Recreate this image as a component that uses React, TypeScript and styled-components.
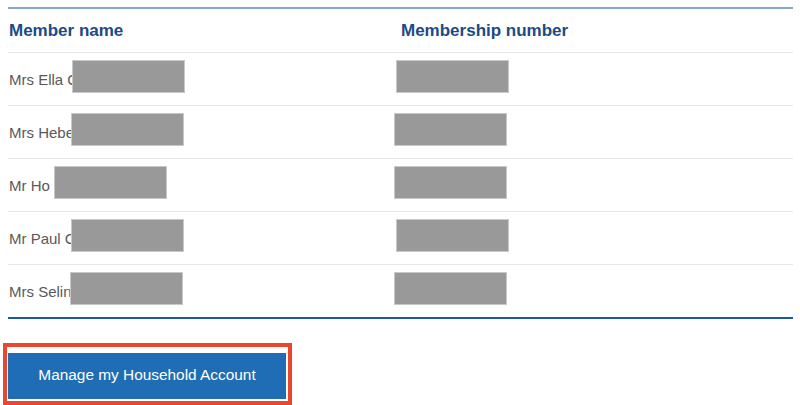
import React from "react";
import styled, { createGlobalStyle } from "styled-components";

const Global = createGlobalStyle`
  html, body { margin: 0; padding: 0; background: #ffffff; }
  body { font-family: "Liberation Sans", Arial, sans-serif; }
`;

const Page = styled.div`
  width: 800px;
  height: 405px;
  overflow: hidden;
  padding-top: 7px;
  box-sizing: border-box;
`;

const Table = styled.div`
  margin-left: 8px;
  width: 785px;
  border-top: 2px solid #86a9cf;
`;

const Row = styled.div<{ $head?: boolean; $last?: boolean }>`
  display: grid;
  grid-template-columns: 387px 1fr;
  align-items: center;
  height: ${(p) => (p.$head ? "43px" : "52px")};
  border-bottom: ${(p) => (p.$last ? "2px solid #1d5a9a" : "1px solid #e6e6e6")};
`;

const HeadCell = styled.div<{ $indent: number }>`
  padding-left: ${(p) => p.$indent}px;
  font-size: 17px;
  font-weight: bold;
  color: #1d4a85;
  padding-top: 1px;
`;

const Cell = styled.div`
  position: relative;
  height: 100%;
  display: flex;
  align-items: center;
  padding-left: 1px;
  font-size: 15px;
  color: #595959;
`;

const Redact = styled.div<{ $left: number }>`
  position: absolute;
  left: ${(p) => p.$left}px;
  top: 8px;
  width: 111px;
  height: 31px;
  background: #999999;
  box-shadow: 0 0 0 1px #c8c8c8;
`;

const ButtonArea = styled.div`
  margin-top: 24px;
  margin-left: 3px;
  display: inline-block;
  border: 4px solid #e8482f;
  padding: 6px 2px 2px 1px;
`;

const Button = styled.button`
  width: 278px;
  height: 46px;
  border: none;
  background: #1f6db4;
  color: #ffffff;
  font-family: "Liberation Sans", Arial, sans-serif;
  font-size: 15.4px;
  padding: 0 0 2px 0;
  display: block;
  cursor: pointer;
`;

const members = [
  { name: "Mrs Ella C", nameBox: 65, numBox: 2 },
  { name: "Mrs Heber", nameBox: 64, numBox: 0 },
  { name: "Mr Ho", nameBox: 47, numBox: 0 },
  { name: "Mr Paul C", nameBox: 64, numBox: 2 },
  { name: "Mrs Selina", nameBox: 63, numBox: 0 },
];

export default function App() {
  return (
    <Page>
      <Global />
      <Table>
        <Row $head>
          <HeadCell $indent={1}>Member name</HeadCell>
          <HeadCell $indent={6}>Membership number</HeadCell>
        </Row>
        {members.map((m, i) => (
          <Row key={m.name} $last={i === members.length - 1}>
            <Cell>
              {m.name}
              <Redact $left={m.nameBox} />
            </Cell>
            <Cell>
              <Redact $left={m.numBox} />
            </Cell>
          </Row>
        ))}
      </Table>
      <ButtonArea>
        <Button>Manage my Household Account</Button>
      </ButtonArea>
    </Page>
  );
}
